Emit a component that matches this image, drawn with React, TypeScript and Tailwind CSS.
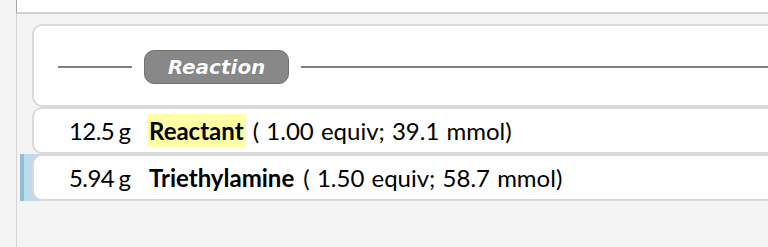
type Reagent = {
  mass: string;
  name: string;
  equiv: string;
  mmol: string;
  limiting?: boolean;
  selected?: boolean;
};

const reagents: Reagent[] = [
  { mass: "12.5 g", name: "Reactant", equiv: "1.00", mmol: "39.1", limiting: true },
  { mass: "5.94 g", name: "Triethylamine", equiv: "1.50", mmol: "58.7", selected: true },
];

function SectionHeader({ title }: { title: string }) {
  return (
    <div className="flex h-[83px] items-center rounded-l-[10px] border-2 border-r-0 border-[#d9d9d9] bg-white pl-6 pt-[3px]">
      <div className="h-[2px] w-[74px] bg-[#808080]" />
      <div className="mx-3 flex h-[34px] w-[145px] items-center justify-center rounded-[10px] border border-[#727272] bg-[#888888]">
        <span className="font-['DejaVu_Sans',sans-serif] text-[20px] font-bold italic text-white [text-shadow:0_0_1px_#555]">
          {title}
        </span>
      </div>
      <div className="h-[2px] flex-1 bg-[#808080]" />
    </div>
  );
}

function ReagentRow({ r }: { r: Reagent }) {
  return (
    <div
      className={
        r.selected
          ? "border-l-4 border-[#8fbfd7] bg-[#bddcea] pl-2"
          : "border-l-4 border-transparent pl-2"
      }
    >
      <div className="flex h-[47px] items-center rounded-l-[10px] border-2 border-r-0 border-[#d9d9d9] bg-white pl-[35px] text-[24px] text-black">
        <span className="w-[78px] shrink-0 tracking-[-0.6px] [word-spacing:-1px]">{r.mass}</span>
        <span
          className={
            r.limiting
              ? "bg-[#ffffa6] px-[2px] py-[1px] font-bold leading-[31px]"
              : "px-[2px] py-[1px] font-bold leading-[31px]"
          }
        >
          {r.name}
        </span>
        <span className="whitespace-pre [word-spacing:1px]">
          {" ( "}
          {r.equiv} equiv; {r.mmol} mmol)
        </span>
      </div>
    </div>
  );
}

export default function App() {
  return (
    <div className="flex h-[247px] w-[768px] overflow-hidden bg-[#f4f4f4] font-['Lato',sans-serif]">
      <div className="w-4 shrink-0" />
      <div className="flex min-w-0 flex-1 flex-col">
        {/* toolbar strip above the list */}
        <div className="h-[14px] shrink-0 border-b-2 border-l border-[#d0d0d0] border-l-[#a6a6a6] bg-white" />
        <div className="flex-1 border-l border-[#d6d6d6] pl-[3px] pt-[10px]">
          <div className="-mr-4 flex flex-col">
            <div className="pl-3">
              <SectionHeader title="Reaction" />
            </div>
            {reagents.map((r) => (
              <ReagentRow key={r.name} r={r} />
            ))}
          </div>
        </div>
      </div>
    </div>
  );
}
